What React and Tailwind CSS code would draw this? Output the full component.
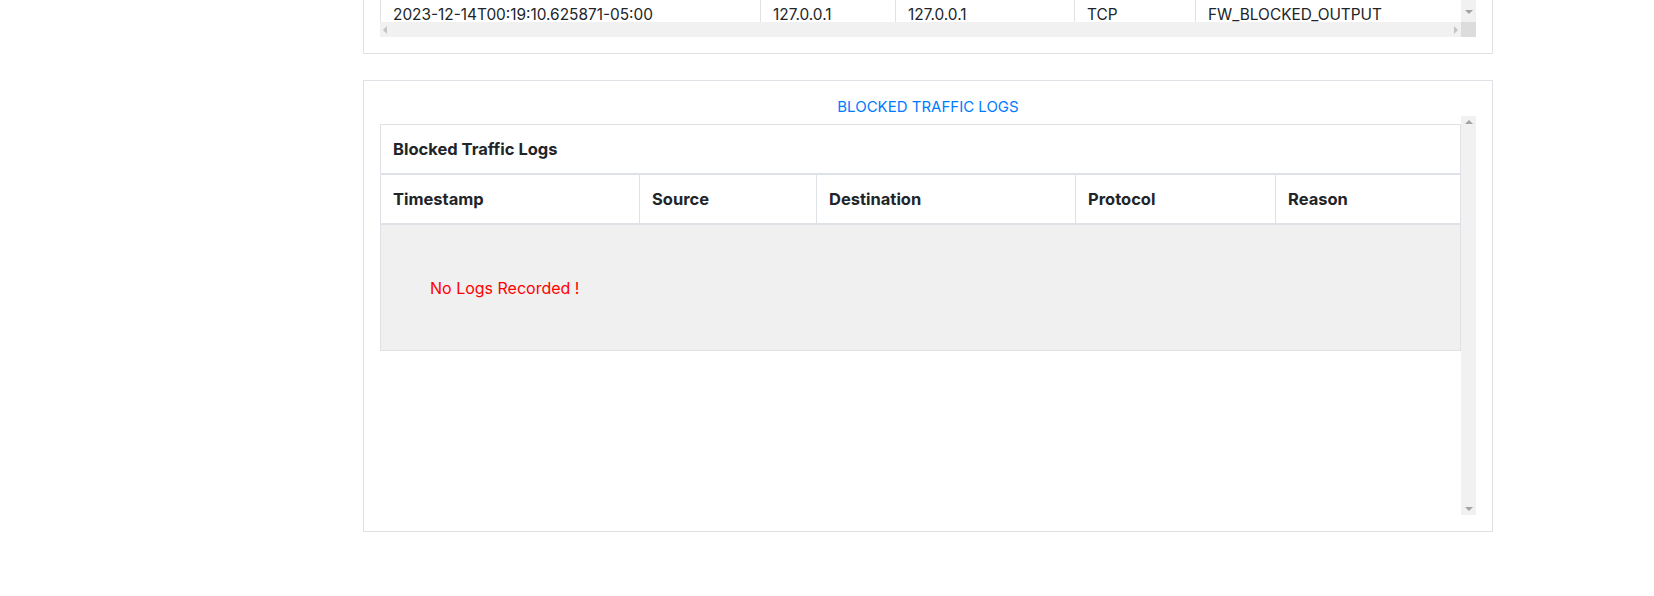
const border = "border-[#dee2e6]";

function Arrow({ dir }) {
  const shapes = {
    up: "border-x-[4px] border-x-transparent border-b-[4px] border-b-[#a3a3a3]",
    down: "border-x-[4px] border-x-transparent border-t-[4px] border-t-[#a3a3a3]",
    left: "border-y-[4px] border-y-transparent border-r-[4px] border-r-[#c4c4c4]",
    right: "border-y-[4px] border-y-transparent border-l-[4px] border-l-[#c4c4c4]",
  };
  return <div className={"w-0 h-0 " + shapes[dir]} />;
}

function FirewallCard() {
  const cells = [
    ["w-[379px]", "2023-12-14T00:19:10.625871-05:00"],
    ["w-[135px]", "127.0.0.1"],
    ["w-[179px]", "127.0.0.1"],
    ["w-[121px]", "TCP"],
    ["flex-1", "FW_BLOCKED_OUTPUT"],
  ];
  return (
    <div className={`w-[1130px] border-x border-b ${border} px-4 pb-4`}>
      <div className="flex">
        <div className="w-[1081px]">
          <div className={`flex h-[22px] overflow-hidden border-l ${border}`}>
            {cells.map(([w, t], i) => (
              <div
                key={i}
                className={`${w} ${i > 0 ? "border-l " + border : ""} pl-3 pt-[3px] text-[15.4px] leading-6 whitespace-nowrap`}
              >
                {t}
              </div>
            ))}
          </div>
          <div className="h-[15px] bg-[#f1f1f1] flex items-center justify-between px-[3px]">
            <Arrow dir="left" />
            <Arrow dir="right" />
          </div>
        </div>
        <div className="w-[15px] flex flex-col">
          <div className="h-[22px] bg-[#f1f1f1] flex items-end justify-center pb-[8px]">
            <Arrow dir="down" />
          </div>
          <div className="h-[15px] bg-[#dcdcdc]" />
        </div>
      </div>
    </div>
  );
}

function BlockedLogs() {
  const cols = [
    ["w-[258px]", "Timestamp"],
    ["w-[177px]", "Source"],
    ["w-[259px]", "Destination"],
    ["w-[200px]", "Protocol"],
    ["flex-1", "Reason"],
  ];
  return (
    <div className={`w-[1130px] mt-[26px] border ${border} px-4 pt-4 pb-4`}>
      <div className="text-center text-[15px] leading-[19px] text-[#007bff]">BLOCKED TRAFFIC LOGS</div>
      <div className="flex h-[399px]">
        <div className="w-[1081px] pt-2">
          <div className={`border ${border}`}>
            <div className={`h-[50px] flex items-center px-3 border-b-2 ${border} text-[16.5px] font-bold`}>
              Blocked Traffic Logs
            </div>
            <div className={`flex h-[50px] border-b-2 ${border}`}>
              {cols.map(([w, t], i) => (
                <div
                  key={t}
                  className={`${w} ${i > 0 ? "border-l " + border : ""} flex items-center px-3 text-[16.5px] font-bold`}
                >
                  {t}
                </div>
              ))}
            </div>
            <div className="h-[125px] bg-[#f0f0f0] flex items-center pl-[49px] text-[16px] text-[#ff0000]">
              No Logs Recorded !
            </div>
          </div>
        </div>
        <div className="w-[15px] bg-[#f1f1f1] flex flex-col items-center justify-between py-[4px]">
          <Arrow dir="up" />
          <Arrow dir="down" />
        </div>
      </div>
    </div>
  );
}

export default function App() {
  return (
    <div className="min-h-screen bg-white text-[#212529] font-['Inter','Noto_Sans',sans-serif]">
      <div className="ml-[363px]">
        <FirewallCard />
        <BlockedLogs />
      </div>
    </div>
  );
}
